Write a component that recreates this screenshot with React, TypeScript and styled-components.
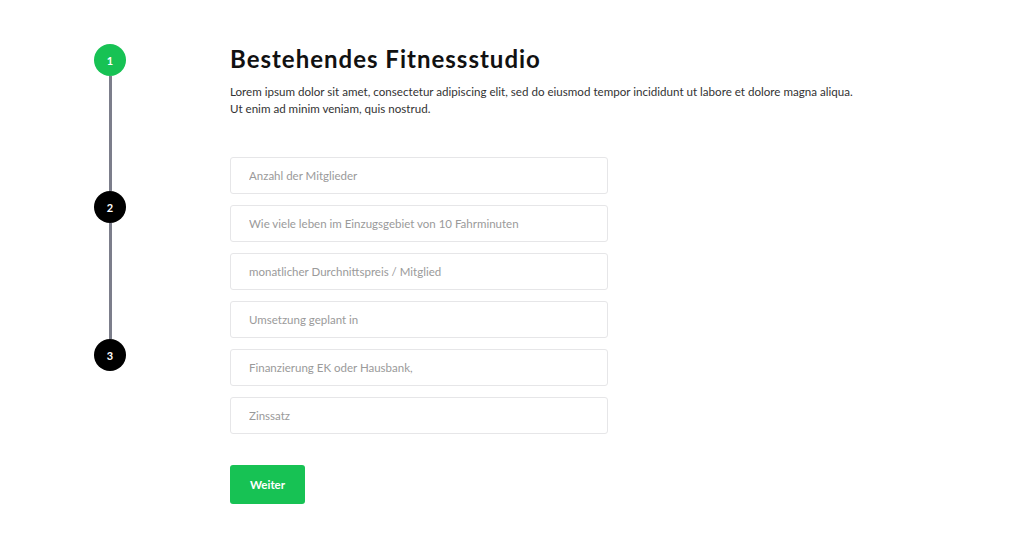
import React from 'react'
import styled, { createGlobalStyle } from 'styled-components'

const Global = createGlobalStyle`
  html, body { margin: 0; padding: 0; background: #fff; }
  body { font-family: 'Lato', 'Noto Sans', sans-serif; color: #1d1d1f; }
  * { box-sizing: border-box; }
`

const Page = styled.div`
  display: flex;
  align-items: flex-start;
  gap: 104px;
  padding: 44px 0 0 94px;
  height: 549px;
`

const Stepper = styled.div`
  display: flex;
  flex-direction: column;
  align-items: center;
  width: 32px;
`

const Step = styled.div<{ $active?: boolean }>`
  width: 32px;
  height: 32px;
  border-radius: 50%;
  background: ${(p) => (p.$active ? '#17c254' : '#000')};
  color: #fff;
  display: flex;
  align-items: center;
  justify-content: center;
  font-size: 11px;
  font-weight: 700;
`

const Line = styled.div<{ $length: number }>`
  width: 3px;
  height: ${(p) => p.$length}px;
  background: #7c7e8b;
`

const Content = styled.div`
  display: flex;
  flex-direction: column;
`

const Title = styled.h1`
  margin: 0;
  font-size: 24px;
  font-weight: 700;
  letter-spacing: 1px;
  line-height: 30px;
  color: #111;
`

const Lead = styled.p`
  margin: 10px 0 0;
  font-size: 11.6px;
  line-height: 16.5px;
  color: #333;
  max-width: 660px;
`

const Form = styled.form`
  display: flex;
  flex-direction: column;
  gap: 11px;
  margin-top: 40px;
`

const Field = styled.input`
  width: 378px;
  height: 37px;
  border: 1px solid #e6e6e8;
  border-radius: 3px;
  padding: 0 18px;
  font-family: inherit;
  font-size: 11.5px;
  color: #333;
  outline: none;
  &::placeholder { color: #9a9a9a; }
`

const Button = styled.button`
  margin-top: 20px;
  width: 75px;
  height: 39px;
  border: 0;
  border-radius: 3px;
  background: #17c254;
  color: #fff;
  font-family: inherit;
  font-size: 11.5px;
  font-weight: 700;
  cursor: pointer;
`

const fields = [
  'Anzahl der Mitglieder',
  'Wie viele leben im Einzugsgebiet von 10 Fahrminuten',
  'monatlicher Durchnittspreis / Mitglied',
  'Umsetzung geplant in',
  'Finanzierung EK oder Hausbank,',
  'Zinssatz',
]

export default function App() {
  return (
    <>
      <Global />
      <Page>
        <Stepper>
          <Step $active>1</Step>
          <Line $length={115} />
          <Step>2</Step>
          <Line $length={116} />
          <Step>3</Step>
        </Stepper>
        <Content>
          <Title>Bestehendes Fitnessstudio</Title>
          <Lead>
            Lorem ipsum dolor sit amet, consectetur adipiscing elit, sed do eiusmod tempor incididunt ut labore et dolore magna aliqua.
            <br />
            Ut enim ad minim veniam, quis nostrud.
          </Lead>
          <Form onSubmit={(e) => e.preventDefault()}>
            {fields.map((f) => (
              <Field key={f} placeholder={f} />
            ))}
            <div>
              <Button type="submit">Weiter</Button>
            </div>
          </Form>
        </Content>
      </Page>
    </>
  )
}
